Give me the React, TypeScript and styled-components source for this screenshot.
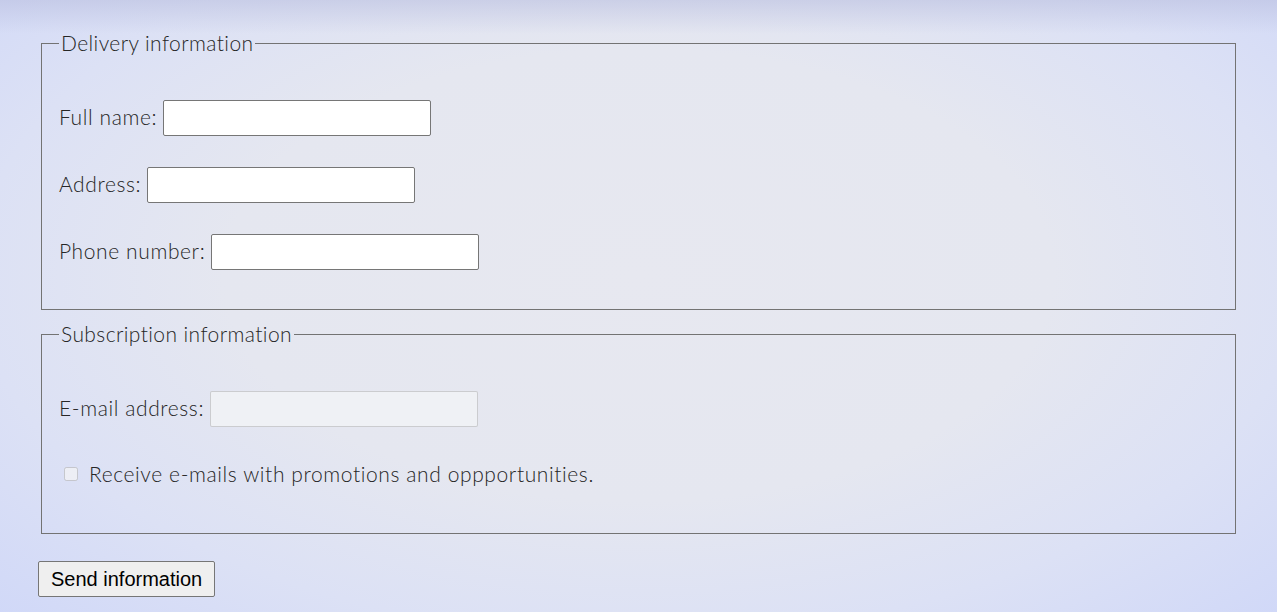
import React from "react";
import styled, { createGlobalStyle } from "styled-components";

const Global = createGlobalStyle`
  html, body {
    margin: 0;
    padding: 0;
    height: 100%;
  }
  body {
    min-height: 612px;
    background:
      linear-gradient(to bottom, rgba(185, 190, 222, 0.55) 0px, rgba(200, 205, 235, 0) 34px),
      radial-gradient(ellipse 72% 82% at 50% 45%, #e7e8f0 0%, #e5e7f0 45%, #dce1f5 72%, #cfd7f8 100%);
    background-color: #dfe3f4;
    font-family: "Lato", "Open Sans", sans-serif;
    color: #333;
  }
`;

const Page = styled.form`
  display: flex;
  flex-direction: column;
  align-items: flex-start;
  padding: 31px 38px 0 38px;
  min-height: 612px;
  box-sizing: border-box;
`;

const Fieldset = styled.fieldset<{ $top: number; $pb: number }>`
  align-self: stretch;
  margin: ${(p) => p.$top}px 3px 0 3px;
  padding: 45px 17px ${(p) => p.$pb}px 17px;
  border: 1px solid #737373;
  display: flex;
  flex-direction: column;
  gap: 31px;
  min-width: 0;
`;

const Legend = styled.legend`
  padding: 0 2px 1px 2px;
  font-size: 21px;
  line-height: 23px;
  font-weight: 300;
  color: #262626;
  letter-spacing: 0.4px;
`;

const Row = styled.div`
  display: flex;
  align-items: center;
  gap: 6px;
  height: 36px;
`;

const Label = styled.label`
  font-size: 21px;
  line-height: 24px;
  font-weight: 300;
  padding-bottom: 3px;
  color: #262626;
  letter-spacing: 0.6px;
`;

const TextInput = styled.input`
  box-sizing: border-box;
  width: 268px;
  height: 36px;
  margin: 0;
  padding: 1px 4px;
  border: 1px solid #767676;
  border-radius: 2px;
  background: #fff;
  font-family: "Lato", sans-serif;
  font-size: 16px;
  &:disabled {
    background: #eff1f5;
    border-color: rgba(118, 118, 118, 0.3);
  }
`;

const CheckRow = styled.div`
  display: flex;
  align-items: center;
  height: 36px;
  gap: 11px;
  padding-left: 5px;
  margin-top: -1px;
  margin-bottom: -2px;
`;

const Check = styled.input`
  width: 14px;
  height: 14px;
  margin: 0 0 2px 0;
`;

const SendButton = styled.button`
  margin-top: 27px;
  box-sizing: border-box;
  height: 36px;
  padding: 0 12px;
  font-family: "Liberation Sans", Arial, sans-serif;
  font-size: 20px;
  color: #000;
  background: #efefef;
  border: 1px solid #767676;
  border-radius: 2px;
`;

export default function App() {
  return (
    <>
      <Global />
      <Page onSubmit={(e) => e.preventDefault()}>
        <Fieldset $top={0} $pb={39}>
          <Legend>Delivery information</Legend>
          <Row>
            <Label htmlFor="fn">Full name:</Label>
            <TextInput id="fn" type="text" />
          </Row>
          <Row>
            <Label htmlFor="ad">Address:</Label>
            <TextInput id="ad" type="text" />
          </Row>
          <Row>
            <Label htmlFor="ph">Phone number:</Label>
            <TextInput id="ph" type="text" />
          </Row>
        </Fieldset>
        <Fieldset $top={12} $pb={42}>
          <Legend>Subscription information</Legend>
          <Row>
            <Label htmlFor="em">E-mail address:</Label>
            <TextInput id="em" type="email" disabled />
          </Row>
          <CheckRow>
            <Check id="cb" type="checkbox" disabled />
            <Label htmlFor="cb">Receive e-mails with promotions and oppportunities.</Label>
          </CheckRow>
        </Fieldset>
        <SendButton type="submit">Send information</SendButton>
      </Page>
    </>
  );
}
